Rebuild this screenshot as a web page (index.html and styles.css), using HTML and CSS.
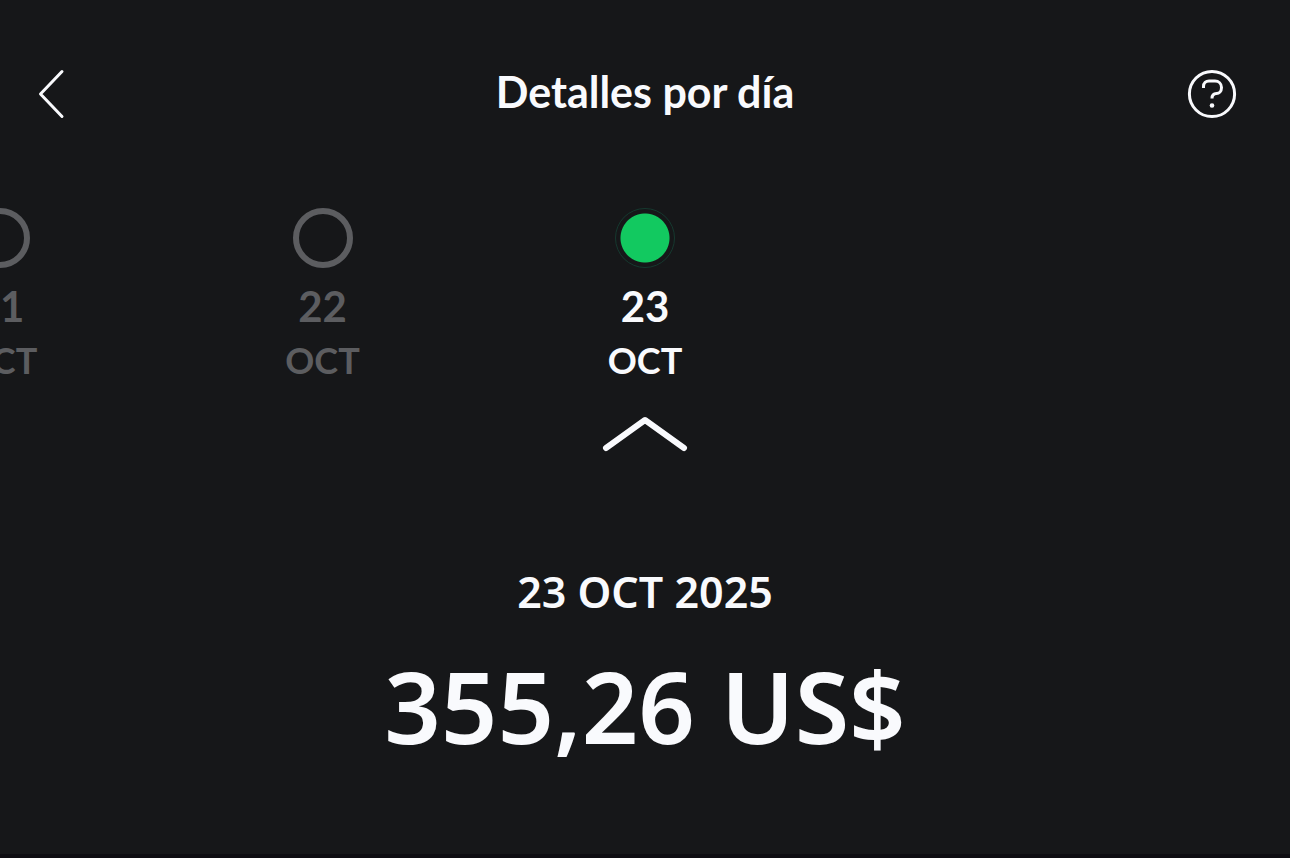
FILE: index.html
```html
<!DOCTYPE html>
<html lang="es">
<head>
<meta charset="utf-8">
<meta name="viewport" content="width=device-width, initial-scale=1">
<title>Detalles por día</title>
<link rel="stylesheet" href="styles.css">
</head>
<body>
<div class="screen">
  <header class="topbar">
    <button class="icon-button" type="button" aria-label="Volver">
      <svg class="icon-back" viewBox="0 0 28 52" aria-hidden="true"><path d="M25 3.500 3.500 26 25 48.500"/></svg>
    </button>
    <h1 class="title">Detalles por día</h1>
    <button class="icon-button icon-button-end" type="button" aria-label="Ayuda">
      <svg class="icon-help" viewBox="0 0 50 50" aria-hidden="true">
        <circle cx="25" cy="25" r="22.600"/>
        <path class="icon-mark" d="M16.500 19V17.500C16.500 14 19 12 22 12H28C31.500 12 34.500 14.500 34.500 18.500S32 24.500 29.500 24.500C26.500 24.500 25 26 25 29.500"/>
        <circle class="icon-dot" cx="25" cy="36.500" r="2.300"/>
      </svg>
    </button>
  </header>
  <main>
    <nav class="days" aria-label="Días">
      <button class="day" type="button"><span class="ring"></span><span class="number">21</span><span class="month">OCT</span></button>
      <button class="day" type="button"><span class="ring"></span><span class="number">22</span><span class="month">OCT</span></button>
      <button class="day day-current" type="button" aria-current="date"><span class="ring"></span><span class="number">23</span><span class="month">OCT</span></button>
    </nav>
    <svg class="pointer" viewBox="0 0 88 40" aria-hidden="true"><path d="M5 34 44 6 83 34"/></svg>
    <section class="summary">
      <p class="date">23 OCT 2025</p>
      <p class="amount">355,26 US$</p>
    </section>
  </main>
</div>
</body>
</html>
```
FILE: styles.css
```css
* { box-sizing: border-box; }
body {
  margin: 0;
  background: #161719;
  color: #f9fafd;
  font-family: Lato, "Noto Sans", sans-serif;
  font-weight: 700;
}
.screen {
  min-height: 100vh;
  overflow: hidden;
  border-bottom: 4px solid #0e0d12;
}
button {
  padding: 0;
  border: 0;
  background: none;
  color: inherit;
  font: inherit;
  cursor: pointer;
}
.topbar {
  display: grid;
  grid-template-columns: 1fr auto 1fr;
  align-items: center;
  height: 188px;
  padding: 0 53px 0 37px;
}
.title {
  margin: 0 0 4px 16px;
  font-size: 43px;
  font-weight: 700;
  line-height: 56px;
}
.icon-button { display: flex; justify-self: start; }
.icon-button-end { justify-self: end; }
svg {
  fill: none;
  stroke: currentColor;
  stroke-linecap: round;
  stroke-linejoin: round;
}
.icon-back { width: 28px; height: 52px; stroke-width: 3; }
.icon-help { width: 50px; height: 50px; stroke-width: 3; }
.icon-mark { stroke-linecap: butt; }
.icon-dot { fill: currentColor; stroke: none; }
.days {
  display: grid;
  grid-template-columns: repeat(3, 25vw);
  margin-left: -12.5vw;
  padding-top: 20px;
}
.day {
  display: flex;
  flex-direction: column;
  align-items: center;
  color: #5c5d60;
}
.ring {
  width: 60px;
  height: 60px;
  border: 6px solid currentColor;
  border-radius: 50%;
}
.number { margin-top: 10px; font-size: 42px; line-height: 56px; }
.month { margin-top: 2px; font-size: 36px; line-height: 48px; }
.day-current { color: #f9fafd; }
.day-current .ring {
  border: 1px solid #15392f;
  background: radial-gradient(circle, #12c960 24px, #161719 25px);
}
.pointer {
  display: block;
  width: 88px;
  height: 40px;
  margin: 30px auto 0;
  stroke-width: 6;
}
.summary {
  margin-top: 110px;
  font-family: "Noto Sans", "Open Sans", sans-serif;
  font-weight: 600;
  text-align: center;
}
.date { margin: 0; font-size: 43px; line-height: 56px; }
.amount { margin: 20px 0 0; font-size: 99px; line-height: 132px; }
```
